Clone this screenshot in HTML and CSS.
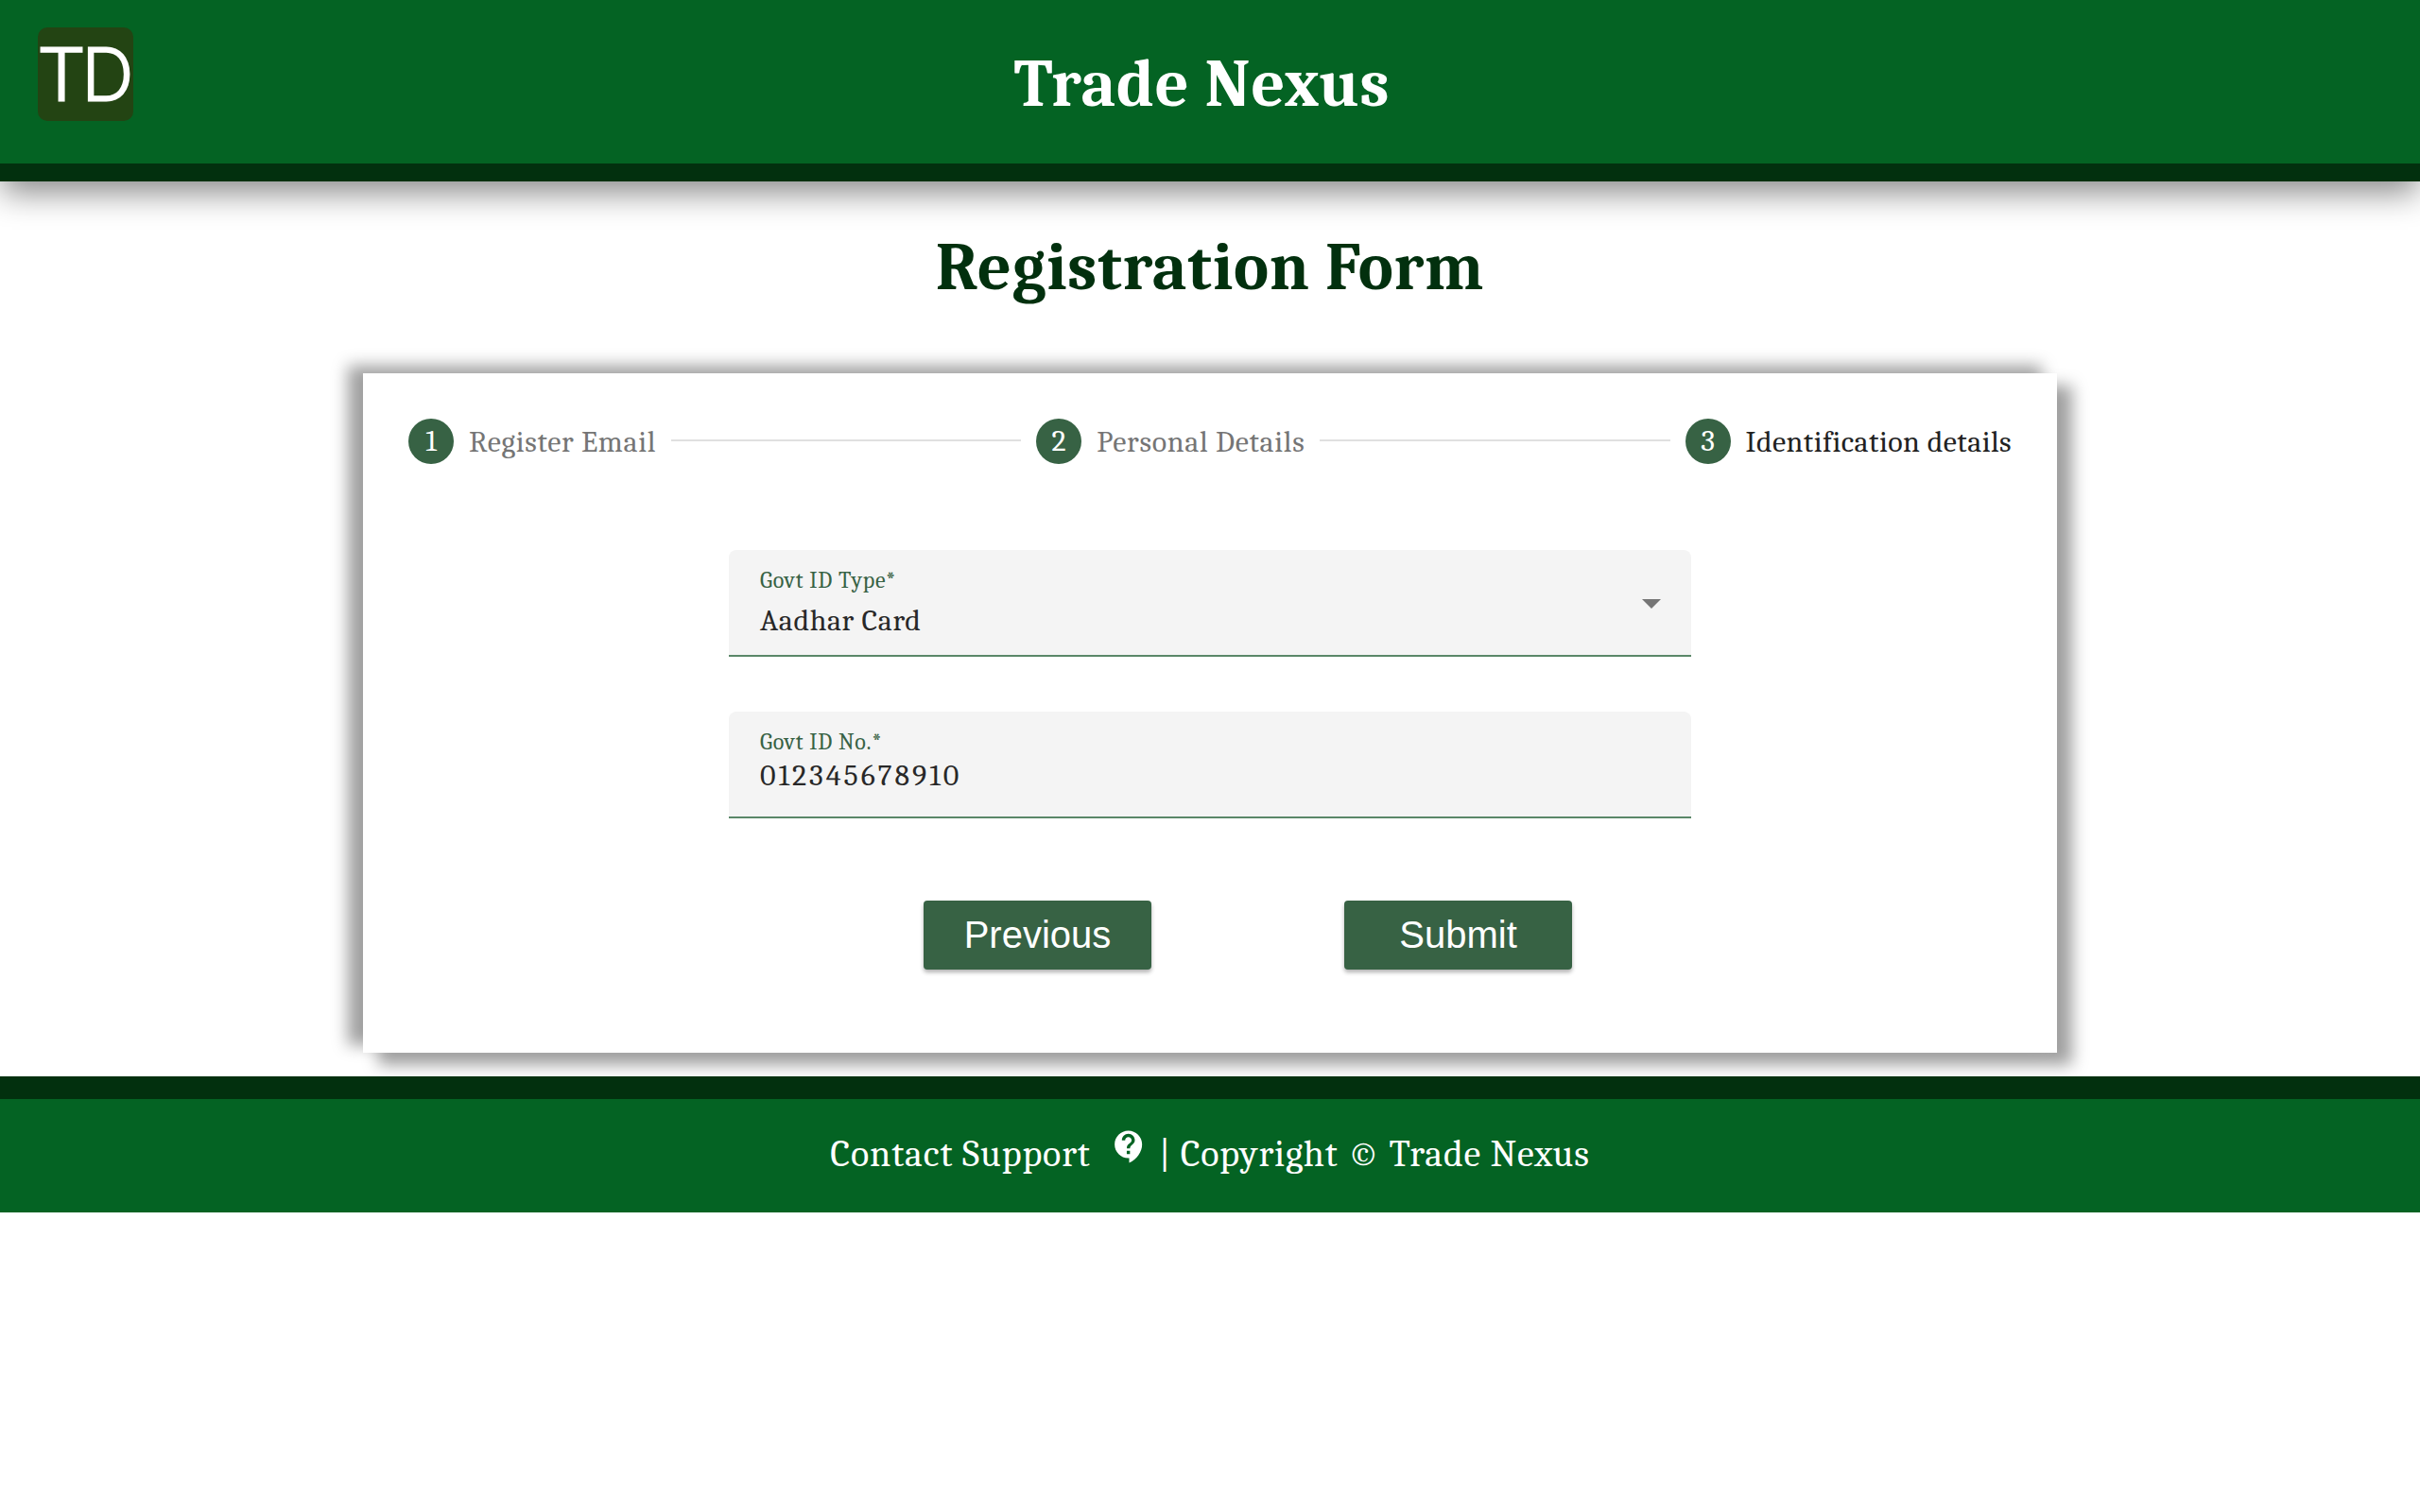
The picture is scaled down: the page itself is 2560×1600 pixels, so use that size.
FILE: index.html
```html
<!DOCTYPE html>
<html lang="en">
<head>
<meta charset="utf-8">
<title>Trade Nexus</title>
<link rel="stylesheet" href="styles.css">
</head>
<body>
<header class="header">
  <div class="logo"><span class="logo-t">T</span><span class="logo-d">D</span></div>
  <h1 class="brand">Trade Nexus</h1>
</header>
<main class="main">
  <h2 class="title">Registration Form</h2>
  <section class="card">
    <div class="steps">
      <div class="step"><span class="num">1</span><span class="step-label label-one">Register Email</span></div>
      <div class="line"></div>
      <div class="step"><span class="num">2</span><span class="step-label label-two">Personal Details</span></div>
      <div class="line"></div>
      <div class="step active"><span class="num">3</span><span class="step-label label-three">Identification details</span></div>
    </div>
    <form class="form">
      <div class="field select">
        <div><div class="label">Govt ID Type*</div><div class="value value-type">Aadhar Card</div></div>
        <svg class="arrow" width="20" height="10" viewBox="0 0 20 10"><path d="M0 0h20L10 10z" fill="#757575"/></svg>
      </div>
      <div class="field">
        <div><div class="label">Govt ID No.*</div><div class="value value-no">012345678910</div></div>
      </div>
      <div class="actions">
        <button type="button" class="btn">Previous</button>
        <button type="button" class="btn">Submit</button>
      </div>
    </form>
  </section>
</main>
<footer class="footer">
  <span class="contact">Contact Support</span>
  <svg class="help" width="41" height="41" viewBox="0 0 24 24"><path fill="#fff" d="M11.5 2C6.81 2 3 5.81 3 10.5S6.81 19 11.5 19h.5v3c4.86-2.34 8-7 8-11.5C20 5.81 16.19 2 11.5 2zm1 14.5h-2v-2h2v2zm0-3.5h-2c0-3.25 3-3 3-5 0-1.100-.9-2-2-2s-2 .9-2 2h-2c0-2.210 1.790-4 4-4s4 1.790 4 4c0 2.500-3 2.750-3 5z"/></svg>
  <span class="copy">| Copyright © Trade Nexus</span>
</footer>
</body>
</html>
```
FILE: styles.css
```css
* { box-sizing: border-box; }
body { margin: 0; background: #fff; font-family: Cambria, Caladea, "Liberation Serif", serif; }
.header { height: 192px; display: grid; grid-template-columns: 101px 1fr 101px; padding: 0 59px 0 40px; background: #046323; border-bottom: 19px solid #02300e; box-shadow: 0 14px 32px -2px rgba(0,0,0,.46); }
.logo { width: 101px; height: 99px; margin-top: 29px; padding-left: 3px; border-radius: 10px; background: #234413; color: #fff; display: flex; font: 300 76px/95px Lato, sans-serif; -webkit-text-stroke: 3px #fff; }
.logo-d { transform: scaleX(.92); transform-origin: left; }
.brand { margin: 0; padding: 3px 0 0 2px; color: #fff; font-size: 70px; line-height: 173px; letter-spacing: .8px; text-align: center; white-space: nowrap; }
.title { margin: 0; height: 203px; color: #02300e; font-size: 70px; line-height: 184px; letter-spacing: .75px; text-align: center; }
.card { width: 1792px; height: 719px; margin: 0 auto 25px; padding: 48px; background: #fff; box-shadow: -16px -8px 16px #a0a0a0, 16px 13px 16px #a0a0a0; }
.steps { display: flex; align-items: center; height: 48px; }
.step { display: flex; align-items: center; gap: 16px; color: #757575; font-size: 32px; }
.step.active { color: #212121; }
.num { width: 48px; height: 48px; border-radius: 50%; background: #376244; color: #fff; line-height: 48px; text-align: center; }
.step-label { white-space: nowrap; }
.label-one { letter-spacing: .64px; }
.label-two { letter-spacing: .68px; }
.label-three { letter-spacing: .43px; }
.line { flex: 1; height: 2px; margin: 0 16px 2px; background: #e0e0e0; }
.form { width: 1018px; margin: 91px auto 0; }
.field { height: 113px; margin-bottom: 58px; padding: 16px 32px 0 33px; display: flex; justify-content: space-between; background: #f4f4f4; border-bottom: 2px solid #5a8768; border-radius: 8px 8px 0 0; }
.label { color: #376244; font-size: 24px; line-height: 32px; letter-spacing: .75px; }
.value { color: #282828; font-size: 32px; line-height: 54px; }
.value-type { letter-spacing: .6px; }
.value-no { line-height: 40px; letter-spacing: 2.95px; }
.arrow { margin-top: 36px; }
.actions { display: flex; gap: 204px; padding-left: 206px; margin-top: 87px; }
.btn { width: 241px; height: 73px; padding: 0; border: 0; border-radius: 4px; background: #376244; color: #fff; font: 40px "Liberation Sans", Arial, sans-serif; box-shadow: 0 3px 4px rgba(0,0,0,.3); }
.footer { height: 144px; border-top: 24px solid #02300e; background: #046323; color: #fff; display: flex; justify-content: center; font-size: 40px; line-height: 116px; white-space: nowrap; }
.contact { letter-spacing: .87px; }
.copy { letter-spacing: .8px; }
.help { margin: 30px 11px 0 20px; }
```
